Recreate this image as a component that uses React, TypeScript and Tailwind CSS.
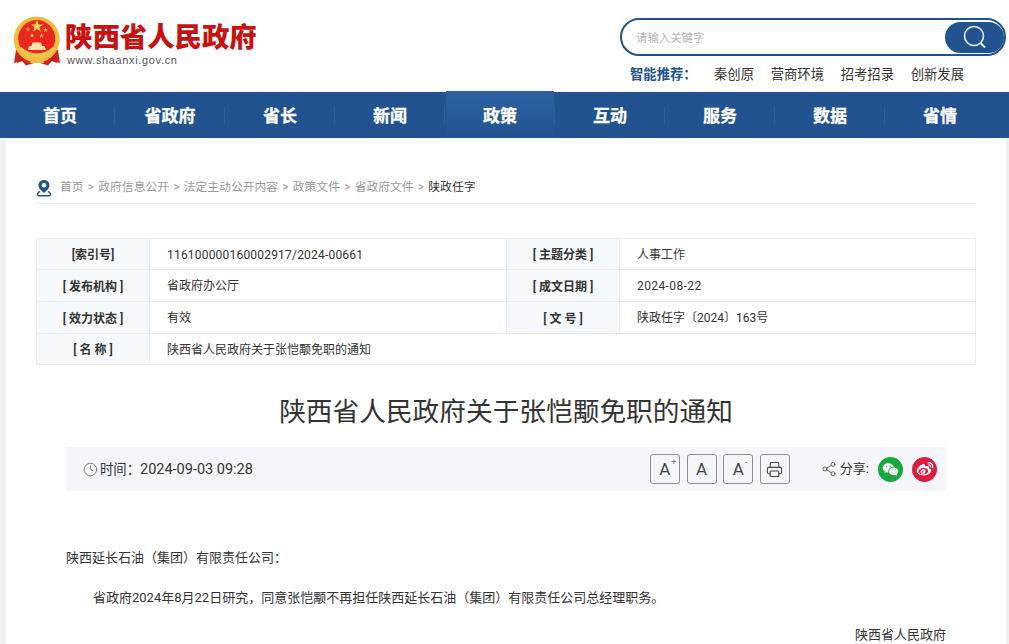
import React from 'react';
import { Clock, Printer, Share2 } from 'lucide-react';
import { RiWechatFill, RiWeiboFill } from 'react-icons/ri';

const NAV_ITEMS = ['首页', '省政府', '省长', '新闻', '政策', '互动', '服务', '数据', '省情'];
const HOT_LINKS = ['秦创原', '营商环境', '招考招录', '创新发展'];
const CRUMBS = ['首页', '政府信息公开', '法定主动公开内容', '政策文件', '省政府文件'];

// Five pointed star for the emblem
const starPoints = (cx: number, cy: number, r: number) =>
  Array.from({ length: 10 }, (_, i) => {
    const radius = i % 2 === 0 ? r : r * 0.4;
    const angle = (Math.PI / 5) * i - Math.PI / 2;
    return `${cx + radius * Math.cos(angle)},${cy + radius * Math.sin(angle)}`;
  }).join(' ');

// Emblem drawn by hand, the logo has no icon in the packages
const Emblem = () => (
  <svg width="48" height="50" viewBox="0 0 48 50" className="shrink-0">
    <path d="M3 34 L1 47 L9 45 L13 49.5 L24 46 L35 49.5 L39 45 L47 47 L45 34 Z" fill="#d2231c" />
    <circle cx="23.7" cy="23.5" r="23" fill="#efbc3f" />
    <circle cx="23.7" cy="22.5" r="18.5" fill="#e8281f" />
    <polygon points={starPoints(24, 10.5, 6.5)} fill="#f8d24a" />
    <polygon points={starPoints(15, 13.5, 2.4)} fill="#f8d24a" />
    <polygon points={starPoints(32.5, 14, 2.4)} fill="#f8d24a" />
    <polygon points={starPoints(19, 19.5, 2.4)} fill="#f8d24a" />
    <polygon points={starPoints(28.5, 19.5, 2.4)} fill="#f8d24a" />
    <path d="M15 34 L16 30 H18.5 L19.5 26.5 H28 L29 30 H31.5 L33 34 Z" fill="#f6e3a8" />
    <path d="M5 33 Q24 50 43 33 L40 31 Q24 44 8 31 Z" fill="#f2c64f" />
    <path d="M18 41 H30 L31 47 H17 Z" fill="#efbc3f" />
    <path d="M6 38 L4 47 L11 44 Z M42 38 L44 47 L37 44 Z" fill="#c81d17" />
  </svg>
);

const InfoLabel = ({ children }: { children: React.ReactNode }) => (
  <div className="flex items-center justify-center bg-[#f6f9fc] pt-[2px] font-semibold text-[#333]">{children}</div>
);

const InfoValue = ({ children }: { children: React.ReactNode }) => (
  <div className="flex items-center px-[17px] pt-px text-[#333]">{children}</div>
);

const ToolButton = ({ children }: { children: React.ReactNode }) => (
  <div className="flex h-[30px] w-[30px] items-center justify-center rounded-[3px] border border-[#8f8f8f] text-[#444]">
    {children}
  </div>
);

const FontGlyph = ({ mark }: { mark?: string }) => (
  <span className="relative text-[17px] leading-none">
    A
    {mark && <span className="absolute left-[12px] top-[-3px] text-[9px] leading-none text-[#777]">{mark}</span>}
  </span>
);

export default function App() {
  return (
    <div
      className="h-[644px] w-[1009px] overflow-hidden bg-[#f0f0f0] text-[13px] text-[#333]"
      style={{ fontFamily: 'Roboto, "Noto Sans CJK SC", "Noto Sans", sans-serif' }}
    >
      {/* Header */}
      <header className="flex h-[92px] justify-between bg-white">
        <div className="ml-[13px] mt-[16px] flex items-start gap-[5px]">
          <Emblem />
          <div className="pt-[4px]">
            <div className="ml-[-1px] text-[27.4px] leading-[36px] font-black whitespace-nowrap text-[#c8120f]">陕西省人民政府</div>
            <div className="mt-[-3px] ml-px text-[11px] leading-[14px] tracking-[0.65px] text-[#555]" style={{ fontFamily: '"Liberation Sans", sans-serif' }}>
              www.shaanxi.gov.cn
            </div>
          </div>
        </div>
        <div className="mr-[3px] mt-[18px] w-[386px]">
          <div className="flex h-[38px] items-center justify-between rounded-full border-2 border-[#20538f] pl-[14px]">
            <span className="mt-[4px] text-[11.4px] text-[#b5b5b5]">请输入关键字</span>
            <div className="flex h-[31px] w-[59px] items-center justify-center rounded-full bg-[#20538f]">
              <svg width="26" height="26" viewBox="0 0 26 26" fill="none" stroke="#e8eef6" strokeWidth="1.6">
                <circle cx="12" cy="12" r="9.5" />
                <path d="M18.5 19 L23 23.5" strokeWidth="2" />
              </svg>
            </div>
          </div>
          <div className="mt-[9px] flex items-center pl-[10px] text-[13.33px] leading-[20px]">
            <span className="w-[84px] font-bold text-[#20538f]">智能推荐：</span>
            {HOT_LINKS.map((link) => (
              <span key={link} className="mr-[16.7px] text-[#333]">{link}</span>
            ))}
          </div>
        </div>
      </header>

      {/* Nav */}
      <nav className="flex h-[46px] bg-[#20538f] pl-[5px]">
        {NAV_ITEMS.map((item, index) => (
          <div key={item} className="relative flex h-full w-[110px] items-center justify-center pt-[4px]">
            {item === '政策' && (
              <div className="absolute inset-x-[1px] top-[-1px] bottom-0 bg-gradient-to-b from-[#2f62a3] to-[#20538f]" />
            )}
            <span className="relative text-[17px] font-bold text-white [-webkit-text-stroke:0.3px_white]">{item}</span>
            {index < NAV_ITEMS.length - 1 && (
              <span className="absolute right-0 top-[14px] h-[18px] w-px bg-[#2f5f98]" />
            )}
          </div>
        ))}
      </nav>

      {/* Main column */}
      <main className="ml-[6px] h-[506px] w-[1000px] bg-white px-[30px]">
        <div className="flex h-[66px] items-end gap-[8px] border-b border-[#eeeeee] pb-[7px] text-[11.8px] text-[#999]">
          <svg width="16" height="18" viewBox="0 0 16 18" fill="none" className="mb-[-1px]">
            <path d="M8 1 C4.5 1 2.5 3.5 2.5 6.2 C2.5 9.5 6 12 8 14 C10 12 13.5 9.5 13.5 6.2 C13.5 3.5 11.5 1 8 1 Z" fill="#20538f" />
            <circle cx="8" cy="6.2" r="2.3" fill="#fff" />
            <path d="M4 12.5 C1 13.5 .8 16.8 3.5 16.8 H12.5 C15.2 16.8 15 13.5 12 12.5" stroke="#20538f" strokeWidth="1.4" />
          </svg>
          <div className="flex items-center gap-[4.2px] leading-[18px]">
            {CRUMBS.map((crumb) => (
              <React.Fragment key={crumb}>
                <span>{crumb}</span>
                <span className="text-[12px]">&gt;</span>
              </React.Fragment>
            ))}
            <span className="text-[#333]">陕政任字</span>
          </div>
        </div>

        {/* Info table */}
        <div className="mt-[34px] grid grid-cols-[113px_357px_113px_356px] grid-rows-[31px_32px_32px_31px] border-t border-l border-[#e9ecef] text-[12px] [&>div]:border-r [&>div]:border-b [&>div]:border-[#e9ecef]">
          <InfoLabel>[索引号]</InfoLabel>
          <InfoValue><span className="tracking-[0.2px]">116100000160002917/2024-00661</span></InfoValue>
          <InfoLabel>[ 主题分类 ]</InfoLabel>
          <InfoValue>人事工作</InfoValue>
          <InfoLabel>[ 发布机构 ]</InfoLabel>
          <InfoValue>省政府办公厅</InfoValue>
          <InfoLabel>[ 成文日期 ]</InfoLabel>
          <InfoValue><span className="tracking-[0.4px]">2024-08-22</span></InfoValue>
          <InfoLabel>[ 效力状态 ]</InfoLabel>
          <InfoValue>有效</InfoValue>
          <InfoLabel>[ 文 号 ]</InfoLabel>
          <InfoValue>陕政任字〔2024〕163号</InfoValue>
          <InfoLabel>[ 名 称 ]</InfoLabel>
          <div className="col-span-3 flex items-center px-[17px] pt-px">陕西省人民政府关于张恺颙免职的通知</div>
        </div>

        <h1 className="mt-[27px] text-center text-[26.7px] leading-[40px] font-normal text-[#333]">
          陕西省人民政府关于张恺颙免职的通知
        </h1>

        {/* Meta bar */}
        <div className="mx-[30px] mt-[15px] flex h-[44px] items-center bg-[#f4f6fb] pl-[17px] pr-[9px] text-[14px] text-[#333]">
          <Clock size={15} strokeWidth={1.5} className="text-[#777]" />
          <span className="ml-[2px] mt-[2px] text-[13.33px]">时间：</span>
          <span className="mt-[2px] text-[14.5px]">2024-09-03 09:28</span>
          <div className="ml-auto flex items-center gap-[6.67px]">
            <ToolButton><FontGlyph mark="+" /></ToolButton>
            <ToolButton><FontGlyph /></ToolButton>
            <ToolButton><FontGlyph mark="-" /></ToolButton>
            <ToolButton><Printer size={17} strokeWidth={1.5} /></ToolButton>
          </div>
          <Share2 size={16} strokeWidth={1.3} className="ml-[31px] text-[#555]" />
          <span className="ml-[3px] text-[13px]">分享:</span>
          <div className="ml-[9px] flex h-[25px] w-[25px] items-center justify-center rounded-full bg-[#16a83a] text-white">
            <RiWechatFill size={17} />
          </div>
          <div className="ml-[9px] flex h-[25px] w-[25px] items-center justify-center rounded-full bg-[#dc1e3c] text-white">
            <RiWeiboFill size={18} />
          </div>
        </div>

        {/* Article */}
        <article className="mx-[30px] text-[13px] text-[#333]">
          <p className="mt-[57px] leading-[20px]">陕西延长石油（集团）有限责任公司：</p>
          <p className="mt-[20px] pl-[27px] leading-[20px]">省政府2024年8月22日研究，同意张恺颙不再担任陕西延长石油（集团）有限责任公司总经理职务。</p>
          <p className="mt-[20px] text-right leading-[14px]">陕西省人民政府</p>
        </article>
      </main>
    </div>
  );
}
